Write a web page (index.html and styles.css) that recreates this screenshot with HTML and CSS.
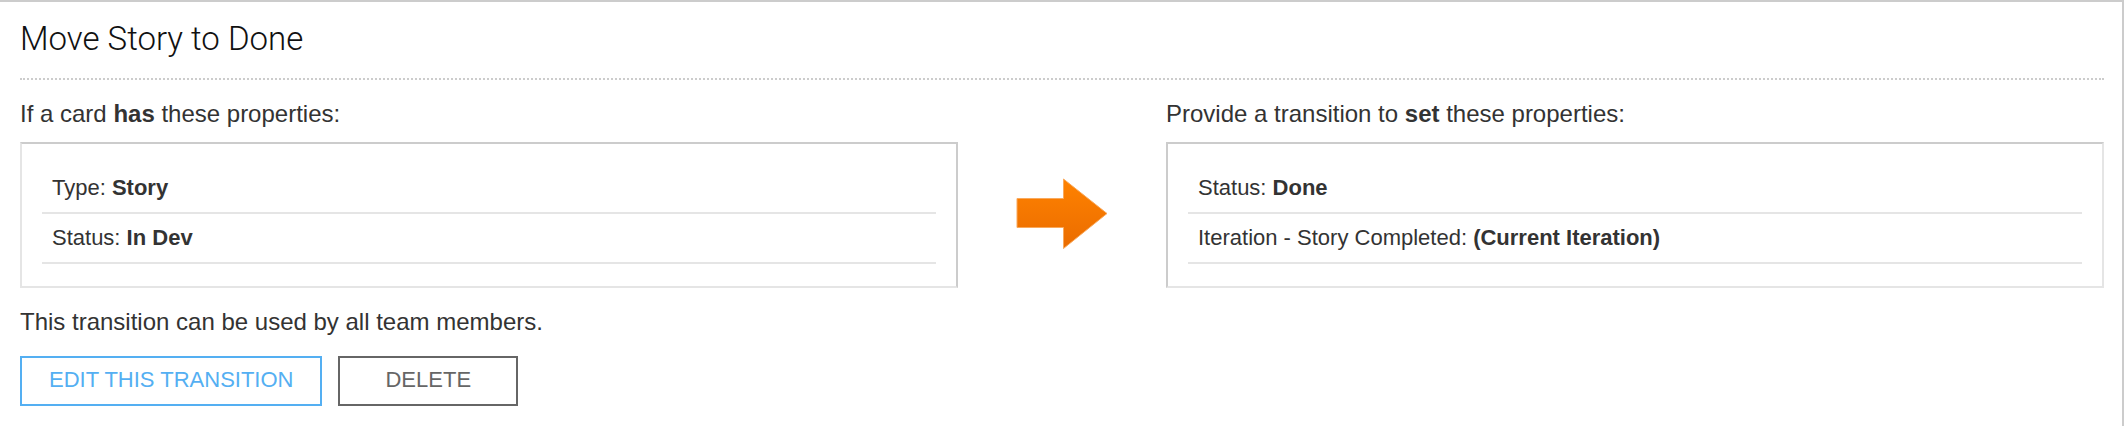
FILE: index.html
```html
<!DOCTYPE html>
<html lang="en">
<head>
<meta charset="utf-8">
<title>Move Story to Done</title>
<link rel="stylesheet" href="styles.css">
</head>
<body>
<main class="transition">
  <h1 class="title">Move Story to Done</h1>
  <div class="flow">
    <section class="side">
      <h2 class="caption">If a card <strong>has</strong> these properties:</h2>
      <ul class="properties before">
        <li>Type: <strong>Story</strong></li>
        <li>Status: <strong>In Dev</strong></li>
      </ul>
    </section>
    <svg class="arrow" viewBox="0 0 92 72" aria-hidden="true">
      <defs>
        <linearGradient id="orange" x1="0" y1="0" x2="0" y2="1">
          <stop offset="0" stop-color="#ff8200"/>
          <stop offset="1" stop-color="#ea6c00"/>
        </linearGradient>
      </defs>
      <path d="M1 20.500H47.500V1L91 35.500L47.500 70.500V49.500H1Z" fill="url(#orange)" stroke="#f9a95c" stroke-width="1"/>
    </svg>
    <section class="side">
      <h2 class="caption">Provide a transition to <strong>set</strong> these properties:</h2>
      <ul class="properties after">
        <li>Status: <strong>Done</strong></li>
        <li>Iteration - Story Completed: <strong>(Current Iteration)</strong></li>
      </ul>
    </section>
  </div>
  <p class="usage">This transition can be used by all team members.</p>
  <div class="actions">
    <button class="button edit" type="button">EDIT THIS TRANSITION</button>
    <button class="button delete" type="button">DELETE</button>
  </div>
</main>
</body>
</html>
```
FILE: styles.css
```css
* {
  box-sizing: border-box;
}

body {
  margin: 0;
  background: #fff;
  color: #333;
  font-family: "Liberation Sans", Arial, sans-serif;
}

.transition {
  min-height: 100vh;
  padding: 17px 18px 20px 20px;
  border-top: 2px solid #ccc;
  border-right: 2px solid #ccc;
}

.title {
  margin: 0;
  padding-bottom: 19px;
  border-bottom: 2px dotted #ccc;
  color: #111;
  font-family: Roboto, "Liberation Sans", sans-serif;
  font-size: 33px;
  font-weight: 300;
  line-height: 40px;
}

.flow {
  display: grid;
  grid-template-columns: minmax(0, 1fr) 92px minmax(0, 1fr);
  column-gap: 58px;
}

.caption {
  margin: 0;
  padding: 18px 0 12px;
  font-size: 24px;
  font-weight: 400;
  line-height: 32px;
}

.properties {
  margin: 0;
  padding: 20px 20px 22px;
  border: 2px solid #e5e5e5;
  border-top-color: #ccc;
  list-style: none;
  font-size: 22px;
  line-height: 24px;
}

.before {
  border-right-color: #ccc;
}

.after {
  border-left-color: #ccc;
}

.properties li {
  padding: 12px 10px;
  border-bottom: 2px solid #e5e5e5;
}

.arrow {
  display: block;
  width: 92px;
  height: 72px;
  margin-top: 98px;
}

.usage {
  margin: 18px 0;
  font-size: 24px;
  line-height: 32px;
}

.actions {
  display: flex;
  gap: 16px;
}

.button {
  padding: 10px 27px 12px;
  border: 2px solid currentColor;
  background: #fff;
  font: 22px/24px "Liberation Sans", Arial, sans-serif;
  cursor: pointer;
}

.edit {
  color: #54aff2;
}

.delete {
  padding-inline: 45px;
  color: #666;
}
```
